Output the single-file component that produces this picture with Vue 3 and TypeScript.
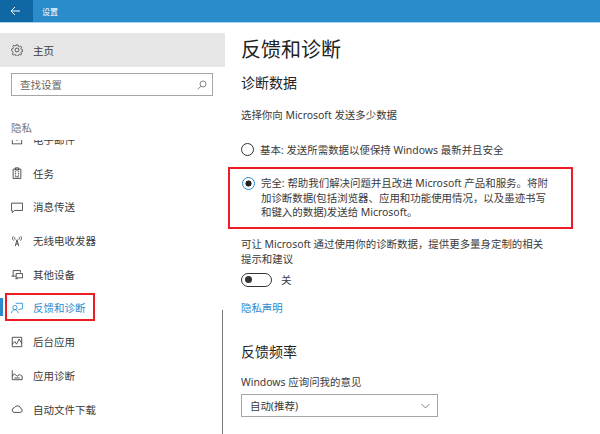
<script setup lang="ts">
interface NavItem { label: string; icon: string; active?: boolean }
const items: NavItem[] = [
  { label: '任务', icon: 'task' },
  { label: '消息传送', icon: 'chat' },
  { label: '无线电收发器', icon: 'radio' },
  { label: '其他设备', icon: 'devices' },
  { label: '反馈和诊断', icon: 'feedback', active: true },
  { label: '后台应用', icon: 'bg' },
  { label: '应用诊断', icon: 'diag' },
  { label: '自动文件下载', icon: 'cloud' },
]
</script>

<template>
  <div class="window">
    <header class="titlebar">
      <div class="back">
        <svg width="11" height="10" viewBox="0 0 11 10" fill="none" stroke="#fff" stroke-width="1"><path d="M10 5H1M5 1 1 5l4 4" /></svg>
      </div>
      <span class="title">设置</span>
    </header>
    <div class="body">
      <aside class="sidebar">
        <div class="home">
          <svg class="icon" viewBox="0 0 14 14" fill="none" stroke="#444" stroke-width="1"><circle cx="7" cy="7" r="2.3" /><path d="M5.8 1h2.4l.4 1.7 1.4.6 1.5-.9 1.3 1.5-1 1.4.5 1.3 1.7.4v2.2l-1.7.4-.5 1.3 1 1.4-1.3 1.4-1.5-.9-1.4.6-.4 1.6H5.8l-.4-1.6-1.4-.6-1.5.9-1.3-1.4 1-1.4-.5-1.3L.5 8.2V6l1.7-.4.5-1.3-1-1.4 1.3-1.5 1.5.9 1.4-.6z" transform="translate(.4 .1) scale(.94)" /></svg>
          <span>主页</span>
        </div>
        <div class="search">
          <span>查找设置</span>
          <svg width="10" height="10" viewBox="0 0 10 10" fill="none" stroke="#777" stroke-width=".9"><circle cx="6" cy="4" r="3" /><path d="M3.8 6.2 .8 9.4" /></svg>
        </div>
        <div class="group">隐私</div>
        <div class="scroller">
          <div class="clipped">
            <svg class="icon" viewBox="0 0 14 14" fill="none" stroke="#444"><rect x="1.5" y="2.5" width="11" height="9" /><path d="m1.5 3 5.5 4.5L12.5 3" /></svg>
            <span>电子邮件</span>
          </div>
          <nav class="nav">
            <div v-for="item in items" :key="item.label" class="item" :class="{ active: item.active }">
              <svg class="icon" viewBox="0 0 14 14" fill="none" stroke="currentColor" stroke-width="1">
                <template v-if="item.icon === 'task'"><path d="M2.5 2.5h9v11h-9zM5 1h4v2.500H5zM4.500 5.500h1.500M8 5.500h1.500M4.500 7.500h1.500M8 7.500h1.500M4.500 9.500h1.500M8 9.500h1.500M4.500 11.500h5" /></template>
                <template v-else-if="item.icon === 'chat'"><path d="M.5 2.500h13v8.500H4l-2.500 2.500V11H.5z" /></template>
                <template v-else-if="item.icon === 'radio'"><path d="m5 13 2-7.500 2 7.500M5.700 10.500h2.600M2.500 1.500c-1 2-1 3.500.5 5M11.500 1.500c1 2 1 3.500-.5 5M4.500 2.500c-.5 1-.5 2 .5 3M9.500 2.500c.5 1 .5 2-.5 3" /></template>
                <template v-else-if="item.icon === 'devices'"><path d="M2.500 9.500V3h8.500v2.500M.5 9.500h5M6 6.500h7.500v5H6zM5 12.500h3" /></template>
                <template v-else-if="item.icon === 'feedback'"><path d="M5.500 1.500h8v6.500H11l-1.500 1.500V8" /><circle cx="4.500" cy="6.500" r="2.500" /><path d="M.5 13c.5-2.500 2-4 4-4s3.500 1.500 4 4" /></template>
                <template v-else-if="item.icon === 'bg'"><path d="M1.500 1.500h11v11h-11zM1.500 9.500l3-3 2 3 3-6 3 5" /></template>
                <template v-else-if="item.icon === 'diag'"><path d="M1.500 1.500v11h11.500V8.500L10 6.500 7 8.500 4 5.500l-2.500 3M4 10.500h6" /></template>
                <template v-else><path d="M3.500 11h7.500a2.300 2.300 0 0 0 .5-4.500 4 4 0 0 0-7.500-1 2.800 2.800 0 0 0-.5 5.500z" /></template>
              </svg>
              <span>{{ item.label }}</span>
              <i v-if="item.active" class="bar"></i>
              <i v-if="item.active" class="mark"></i>
            </div>
          </nav>
          <div class="thumb"></div>
        </div>
      </aside>
      <main class="content">
        <h1>反馈和诊断</h1>
        <h2>诊断数据</h2>
        <p class="lead">选择你向 Microsoft 发送多少数据</p>
        <label class="radio first"><i class="dot"></i><span>基本: 发送所需数据以便保持 Windows 最新并且安全</span></label>
        <div class="highlight">
          <label class="radio"><i class="dot on"></i><span>完全: 帮助我们解决问题并且改进 Microsoft 产品和服务。将附<br />加诊断数据(包括浏览器、应用和功能使用情况，以及墨迹书写<br />和键入的数据)发送给 Microsoft。</span></label>
        </div>
        <p class="tailor">可让 Microsoft 通过使用你的诊断数据，提供更多量身定制的相关<br />提示和建议</p>
        <div class="toggle-row"><i class="toggle"></i><span>关</span></div>
        <a class="link">隐私声明</a>
        <h2 class="freq">反馈频率</h2>
        <p class="ask">Windows 应询问我的意见</p>
        <div class="select">
          <span>自动(推荐)</span>
          <svg width="9" height="6" viewBox="0 0 9 6" fill="none" stroke="#777" stroke-width=".9"><path d="m.5 1 4 4 4-4" /></svg>
        </div>
      </main>
    </div>
  </div>
</template>

<style>
html, body { margin: 0; background: #fff; }
</style>

<style scoped>
.window {
  width: 600px;
  height: 434px;
  overflow: hidden;
  display: flex;
  flex-direction: column;
  font-family: "Noto Sans", "Noto Sans CJK SC", sans-serif;
  font-size: 10.45px;
  color: #3a3a3a;
  background: #fff;
}
.titlebar {
  flex: none;
  height: 23px;
  box-sizing: border-box;
  display: flex;
  align-items: center;
  background: #2a8ccb;
  border-bottom: 1px solid #a9d2ec;
  color: #fff;
}
.back {
  width: 33px;
  height: 100%;
  display: flex;
  align-items: center;
  justify-content: center;
  padding-right: 2px;
  box-sizing: border-box;
  background: #0f67a3;
}
.title { margin-left: 9px; font-size: 8px; }
.body { flex: 1; display: flex; min-height: 0; }
.sidebar {
  flex: none;
  width: 225px;
  display: flex;
  flex-direction: column;
  min-height: 0;
}
.icon { width: 12px; height: 12px; flex: none; }
.home {
  flex: none;
  height: 34px;
  margin-top: 10px;
  display: flex;
  align-items: center;
  gap: 10px;
  padding-left: 11px;
  background: #e6e6e6;
  font-size: 10.5px;
}
.search {
  flex: none;
  width: 202px;
  height: 23px;
  box-sizing: border-box;
  margin: 6px 0 0 11px;
  padding: 0 5px 0 8px;
  display: flex;
  align-items: center;
  justify-content: space-between;
  border: 1.5px solid #a6a6a6;
  color: #666;
  font-size: 10.5px;
}
.group {
  flex: none;
  margin: 24px 0 4px 11px;
  height: 16px;
  line-height: 16px;
  color: #777;
  font-size: 10.5px;
}
.scroller {
  flex: 1;
  position: relative;
  min-height: 0;
  overflow: hidden;
  font-size: 10.5px;
}
.clipped {
  height: 33.7px;
  margin-top: -17.3px;
  display: flex;
  align-items: center;
  gap: 10px;
  padding-left: 11px;
}
.nav { display: flex; flex-direction: column; }
.item {
  position: relative;
  height: 33.7px;
  display: flex;
  align-items: center;
  gap: 10px;
  padding-left: 11px;
}
.item.active { color: #2a8ccb; }
.bar {
  position: absolute;
  left: 0;
  top: 7px;
  width: 3px;
  height: 18px;
  background: #2a8ccb;
}
.mark {
  position: absolute;
  left: 5px;
  top: 2px;
  width: 90px;
  height: 28px;
  box-sizing: border-box;
  border: 2px solid #ee1c25;
}
.thumb {
  position: absolute;
  right: 2px;
  top: 170px;
  width: 1px;
  bottom: 0;
  background: #777;
}
.content { flex: 1; padding: 14px 0 0 16px; min-width: 0; }
h1 {
  margin: 0;
  font-size: 20px;
  line-height: 26px;
  font-weight: 400;
  color: #222;
}
h2 {
  margin: 9px 0 0;
  font-size: 14px;
  line-height: 22px;
  font-weight: 400;
  color: #222;
}
p { margin: 0; line-height: 14.5px; }
.lead { margin-top: 14px; }
.radio { display: flex; gap: 6px; line-height: 14.5px; }
.radio.first { margin-top: 20px; align-items: center; }
.dot {
  flex: none;
  width: 13px;
  height: 13px;
  box-sizing: border-box;
  border: 1.5px solid #333;
  border-radius: 50%;
  margin-top: 1px;
}
.radio.first .dot { margin-top: 0; }
.dot.on {
  border-color: #2a8ccb;
  background: radial-gradient(circle, #222 0 2.8px, #fff 3.3px);
}
.highlight {
  width: 345px;
  height: 62px;
  box-sizing: border-box;
  margin: 9.5px 0 0 -13px;
  padding: 7.8px 10px 0 12px;
  border: 2px solid #ee1c25;
}
.tailor { margin-top: 8.75px; }
.toggle-row { display: flex; align-items: center; gap: 9px; margin-top: 6px; }
.toggle {
  width: 31px;
  height: 14px;
  box-sizing: border-box;
  border: 1.5px solid #333;
  border-radius: 7px;
  position: relative;
}
.toggle::after {
  content: "";
  position: absolute;
  left: 3px;
  top: 2px;
  width: 7px;
  height: 7px;
  border-radius: 50%;
  background: #333;
}
.link { display: block; margin-top: 13px; color: #2a8ccb; line-height: 16px; }
.freq { margin-top: 25px; }
.ask { margin-top: 11.75px; }
.select {
  width: 197px;
  height: 23px;
  box-sizing: border-box;
  margin-top: 4.75px;
  padding: 0 7px 0 8px;
  display: flex;
  align-items: center;
  justify-content: space-between;
  border: 1.5px solid #a6a6a6;
}
</style>
